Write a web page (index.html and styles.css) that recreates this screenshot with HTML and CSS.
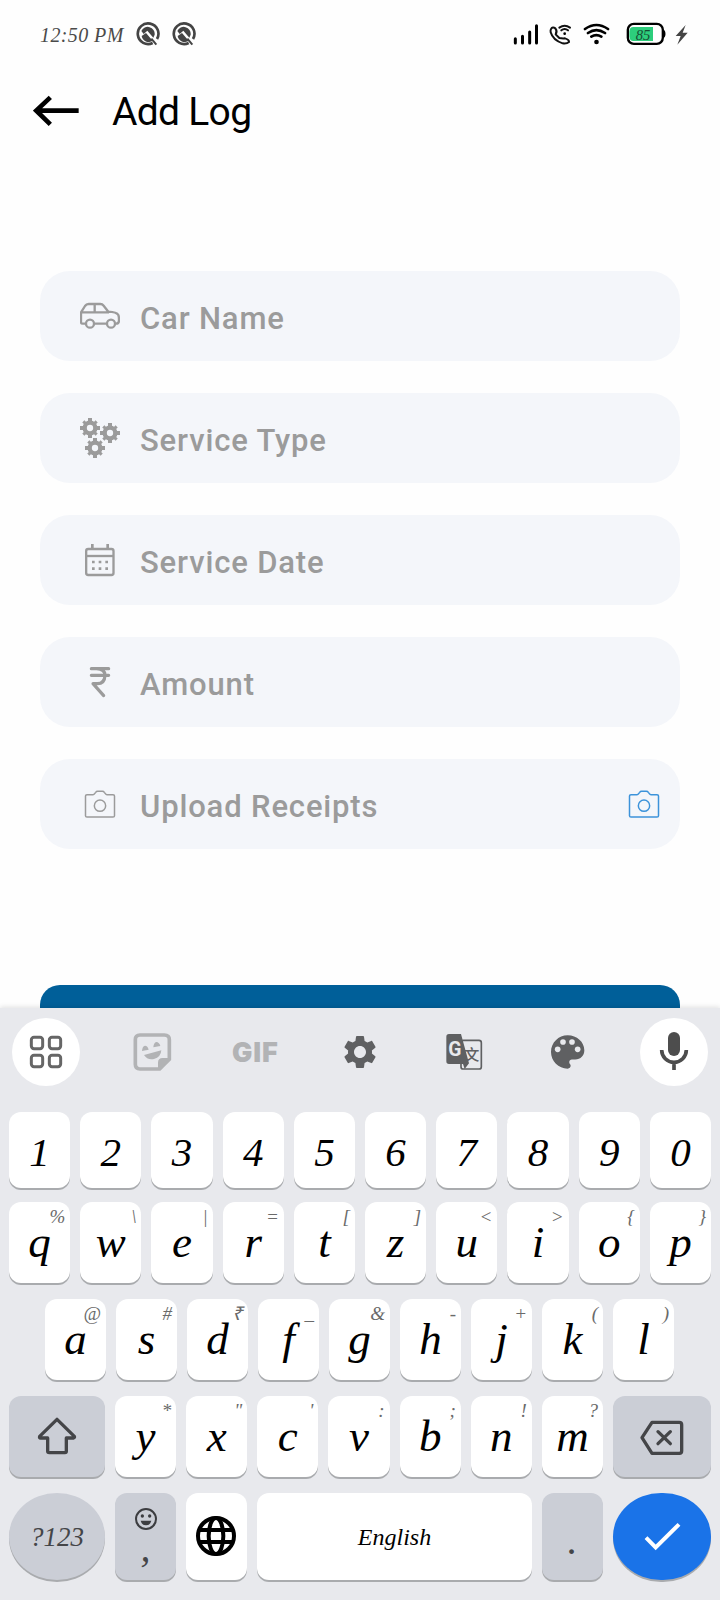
FILE: index.html
```html
<!DOCTYPE html>
<html lang="en">
<head>
<meta charset="utf-8">
<title>Add Log</title>
<link rel="stylesheet" href="styles.css">
</head>
<body>
<div class="screen">
  <main class="app">
    <header class="status">
      <span class="clock">12:50 PM</span>
      <svg class="badge-icon" viewBox="408 66 72 72"><use href="#quick"/></svg>
      <svg class="badge-icon" viewBox="408 66 72 72">
        <g id="quick">
          <path d="M458 129A31 31 0 1 1 471 117" fill="none" stroke="#444" stroke-width="8"/>
          <path d="M424 93A21 21 0 0 1 464 104L460 113L442 92L431 102ZM425 108L438 99L458 122A21 21 0 0 1 425 108Z" fill="#444"/>
          <path d="M454 116L469 134" stroke="#444" stroke-width="6"/>
        </g>
      </svg>
      <div class="status-right">
        <svg class="signal" viewBox="99 66 78 72"><path d="M106 116V129M127.500 109V129M149 96V129M169.500 77V129" stroke="#000" stroke-width="9" stroke-linecap="round"/></svg>
        <svg class="call" viewBox="207 66 69 72"><g fill="none" stroke="#111" stroke-width="6" stroke-linecap="round" stroke-linejoin="round"><path d="M213 87Q218 79 226 85Q233 94 227 103L238 114Q247 116 255 115Q268 119 267 126Q260 132 248 130Q219 121 212 97Q211 90 213 87Z"/><path d="M238 83Q254 72 270 83M244 91Q254 83 264 91"/></g><circle cx="254" cy="101" r="4"/></svg>
        <svg class="wifi" viewBox="309 66 81 72"><g fill="none" stroke="#000" stroke-width="8" stroke-linecap="round"><path d="M315 87Q349 63 384 87M324 99Q349 82 375 99M334 110Q349 101 364 110"/></g><circle cx="349.500" cy="126" r="7"/></svg>
        <svg class="battery" viewBox="438 66 120 72"><rect x="443.500" y="71.500" width="105" height="60" rx="18" fill="#fff" stroke="#000" stroke-width="7"/><path d="M551 92Q556 102 551 111" stroke="#000" stroke-width="6" fill="none"/><path d="M519 81H460Q448 81 448 96V108Q448 123 460 123H519Z" fill="#2dce7c"/><text x="467" y="120" class="battery-text">85</text></svg>
        <svg class="bolt" viewBox="585 66 42 72"><path d="M617 75L587 108H602L592 134L623 98H608Z" fill="#444"/></svg>
      </div>
    </header>
    <div class="titlebar">
      <svg class="back" viewBox="99 285 141 93"><path d="M236 332H110M151 292L109 332L151 373" fill="none" stroke="#000" stroke-width="14"/></svg>
      <h1 class="title">Add Log</h1>
    </div>
    <form class="fields">
      <div class="field">
        <svg class="field-icon" viewBox="150 108 120 120"><g fill="none" stroke="#9b9b9b" stroke-width="7" stroke-linejoin="round"><path d="M166 191H158Q153 191 153 186V157L165 138Q169 132 176 132H211Q217 132 221 137L235 155Q260 156 265 165Q267 169 267 181Q267 191 258 191M195 191H229M153 157H237M194 132V157"/><circle cx="180" cy="191" r="12"/><circle cx="243" cy="191" r="12"/></g></svg>
        <span class="label">Car Name</span>
      </div>
      <div class="field">
        <svg class="field-icon" viewBox="150 474 120 120">
          <g id="cog" fill="none" stroke="#9b9b9b"><circle cx="180" cy="504" r="16" stroke-width="13"/><path d="M180 474V486M180 522V534M150 504H162M198 504H210" stroke-width="12"/><path d="M160 484L168 492M192 516L200 524M200 484L192 492M168 516L160 524" stroke-width="9"/></g>
          <use href="#cog" x="60" y="15"/><use href="#cog" x="15" y="60"/>
        </svg>
        <span class="label">Service Type</span>
      </div>
      <div class="field">
        <svg class="field-icon" viewBox="150 120 120 120"><g fill="none" stroke="#9b9b9b" stroke-width="7"><rect x="168.500" y="147" width="82" height="78" rx="6"/><path d="M168 168H252"/><path d="M187 132V147M233 132V147" stroke-width="8"/><path d="M186 186H194M206 186H214M226 186H234M186 206H194M206 206H214M226 206H234" stroke-width="8"/></g></svg>
        <span class="label">Service Date</span>
      </div>
      <div class="field">
        <svg class="field-icon" viewBox="150 486 120 120"><path d="M184 506H236M184 526H236M200 506Q225 507 225 526Q224 551 202 551H189L221 587" fill="none" stroke="#9b9b9b" stroke-width="9.500" stroke-linecap="round" stroke-linejoin="round"/></svg>
        <span class="label">Amount</span>
      </div>
      <div class="field">
        <svg class="field-icon" viewBox="150 852 120 120"><g id="camera" fill="none" stroke="currentColor" stroke-width="4.500"><path d="M171 884H189Q192 884 194 881L197 877Q199 874 203 874H217Q221 874 223 877L226 881Q228 884 231 884H249Q253.500 884 253.500 888V947Q253.500 951 249 951H171Q166.500 951 166.500 947V888Q166.500 884 171 884Z"/><circle cx="210" cy="917" r="17"/></g></svg>
        <span class="label">Upload Receipts</span>
        <svg class="field-icon upload" viewBox="150 852 120 120"><use href="#camera"/></svg>
      </div>
    </form>
    <div class="submit"></div>
  </main>

  <section class="keyboard">
    <div class="tools">
      <div class="tool round"><svg viewBox="36 54 204 204"><g fill="none" stroke="#666" stroke-width="9"><rect x="94" y="112" width="34" height="34" rx="8"/><rect x="148" y="112" width="34" height="34" rx="8"/><rect x="94" y="166" width="34" height="34" rx="8"/><rect x="148" y="166" width="34" height="34" rx="8"/></g></svg></div>
      <div class="tool"><svg viewBox="350 54 204 204"><path d="M419 105H492Q507 105 507 119V178L478 207H419Q405 207 405 193V119Q405 105 419 105Z" fill="none" stroke="#b2b3b5" stroke-width="11"/><path d="M510 174H487Q473 174 473 188V210ZM425 153Q426 138 434 137Q442 137 445 149ZM459 142Q460 128 468 126Q477 127 480 138ZM431 165L483 151Q482 171 461 177Q441 181 431 165Z" fill="#b2b3b5"/></svg></div>
      <div class="tool gif">GIF</div>
      <div class="tool"><svg viewBox="978 54 204 204"><path transform="translate(1020 96) scale(5)" fill="#5f6062" d="M19.140 12.940c.040-.300.060-.610.060-.940 0-.320-.020-.640-.070-.940l2.030-1.580c.180-.140.230-.410.120-.610l-1.920-3.320c-.120-.220-.370-.290-.590-.220l-2.390.960c-.500-.380-1.030-.700-1.620-.940L14.400 2.810c-.040-.240-.240-.410-.480-.410h-3.840c-.240 0-.430.170-.470.410L9.250 5.350c-.590.240-1.130.570-1.620.940L5.240 5.330c-.220-.080-.470 0-.590.220L2.740 8.870c-.120.210-.080.470.120.610l2.030 1.580c-.050.300-.090.630-.090.940s.020.640.070.940l-2.030 1.580c-.180.140-.230.410-.120.610l1.920 3.320c.120.220.370.290.590.220l2.390-.960c.500.380 1.030.700 1.620.940l.360 2.540c.050.240.240.410.480.410h3.840c.240 0 .440-.170.470-.410l.360-2.540c.590-.240 1.130-.560 1.620-.940l2.390.960c.220.080.470 0 .590-.220l1.920-3.320c.120-.220.070-.470-.120-.610l-2.010-1.580zM12 15.600c-1.980 0-3.600-1.620-3.600-3.600s1.620-3.600 3.600-3.600 3.600 1.620 3.600 3.600-1.620 3.600-3.600 3.600z"/></svg></div>
      <div class="tool"><svg viewBox="212 54 204 204"><rect x="302" y="121" width="61" height="86" rx="7" fill="none" stroke="#5f6062" stroke-width="5"/><path d="M266 102H302L326 190L313 207L308 192H266Q258 192 258 184V110Q258 102 266 102Z" fill="#5f6062"/><text x="264" y="168" class="tr-g">G</text><text x="311" y="180" class="tr-han">文</text></svg></div>
      <div class="tool"><svg viewBox="526 54 204 204"><path transform="translate(564 96) scale(5)" fill="#5f6062" d="M12 2C6.490 2 2 6.490 2 12s4.490 10 10 10c1 0 1.800-.800 1.800-1.700 0-.500-.200-.850-.450-1.150-.250-.300-.400-.650-.400-1.050 0-.900.700-1.600 1.600-1.600H16.500c3.300 0 5.500-2.300 5.500-5.500C22 6 17.500 2 12 2z"/><g fill="#e8e9ed"><circle cx="594" cy="148" r="8.500"/><circle cx="610" cy="126" r="8.500"/><circle cx="637" cy="126" r="8.500"/><circle cx="654" cy="148" r="8.500"/></g></svg></div>
      <div class="tool round"><svg viewBox="840 54 204 204"><rect x="924" y="96" width="36" height="72" rx="18" fill="#4d4d4d"/><path d="M905 150A37 37 0 0 0 979 150M942 187V210" fill="none" stroke="#4d4d4d" stroke-width="11"/></svg></div>
    </div>

    <div class="row digits">
      <div class="key">1</div><div class="key">2</div><div class="key">3</div><div class="key">4</div><div class="key">5</div><div class="key">6</div><div class="key">7</div><div class="key">8</div><div class="key">9</div><div class="key">0</div>
    </div>
    <div class="row">
      <div class="key">q<span class="hint">%</span></div><div class="key">w<span class="hint">\</span></div><div class="key">e<span class="hint">|</span></div><div class="key">r<span class="hint">=</span></div><div class="key">t<span class="hint">[</span></div><div class="key">z<span class="hint">]</span></div><div class="key">u<span class="hint">&lt;</span></div><div class="key">i<span class="hint">&gt;</span></div><div class="key">o<span class="hint">{</span></div><div class="key">p<span class="hint">}</span></div>
    </div>
    <div class="row home">
      <div class="key">a<span class="hint">@</span></div><div class="key">s<span class="hint">#</span></div><div class="key">d<span class="hint">₹</span></div><div class="key">f<span class="hint">_</span></div><div class="key">g<span class="hint">&amp;</span></div><div class="key">h<span class="hint">-</span></div><div class="key">j<span class="hint">+</span></div><div class="key">k<span class="hint">(</span></div><div class="key">l<span class="hint">)</span></div>
    </div>
    <div class="row">
      <div class="key dark wide"><svg viewBox="27 33 288 243"><path d="M171 103L119 154Q117 159 122 159H143V199Q143 203 148 203H195Q199 203 199 199V159H220Q225 158 223 154Z" fill="none" stroke="#444548" stroke-width="10" stroke-linejoin="round"/></svg></div>
      <div class="key">y<span class="hint">*</span></div><div class="key">x<span class="hint">"</span></div><div class="key">c<span class="hint">'</span></div><div class="key">v<span class="hint">:</span></div><div class="key">b<span class="hint">;</span></div><div class="key">n<span class="hint">!</span></div><div class="key">m<span class="hint">?</span></div>
      <div class="key dark widest"><svg viewBox="759 33 294 243"><g fill="none" stroke="#444548" stroke-width="10" stroke-linejoin="round"><path d="M876 112H958Q965 112 965 119V198Q965 205 958 205H876L846 158Z"/><path d="M894 140L931 176M931 140L894 176" stroke-linecap="round"/></g></svg></div>
    </div>
    <div class="row bottom">
      <div class="key dark wide pill symbols">?123</div>
      <div class="key dark comma"><svg viewBox="402 369 66 66"><circle cx="435" cy="402" r="30" fill="none" stroke="#3c3d40" stroke-width="6"/><circle cx="424" cy="393" r="5" fill="#3c3d40"/><circle cx="446" cy="393" r="5" fill="#3c3d40"/><path d="M419 407H451Q447 421 435 421T419 407Z" fill="#3c3d40"/></svg><span class="comma-char">,</span></div>
      <div class="key"><svg viewBox="558 324 183 261"><g fill="none" stroke="#000" stroke-width="12"><circle cx="648" cy="453" r="54"/><ellipse cx="648" cy="453" rx="22" ry="54"/><path d="M598 435H698M598 471H698"/></g></svg></div>
      <div class="key space">English</div>
      <div class="key dark dot">.</div>
      <div class="key widest pill enter"><svg viewBox="759 324 294 261"><path d="M858 458L887 487L957 418" fill="none" stroke="#fff" stroke-width="12"/></svg></div>
    </div>
  </section>
</div>
</body>
</html>
```
FILE: styles.css
```css
* { box-sizing: border-box; }
body { margin: 0; background: #fff; }
svg { display: block; }

.screen {
  width: 720px;
  height: 1600px;
  display: flex;
  flex-direction: column;
  overflow: hidden;
  background: #fefefe;
  font-family: Roboto, sans-serif;
}

.app { height: 1008px; overflow: hidden; }

.status {
  display: flex;
  align-items: center;
  height: 68px;
  padding: 0 31px 0 40px;
}
.clock {
  width: 96px;
  font: italic 20px/24px "Liberation Serif", serif;
  letter-spacing: 0.4px;
  color: #4a4a4a;
  padding-top: 2px;
  white-space: nowrap;
}
.badge-icon { width: 24px; height: 24px; margin-right: 12px; }
.status-right { display: flex; margin-left: auto; }
.status-right svg { height: 24px; }
.signal { width: 26px; margin-right: 10px; }
.call { width: 23px; margin-right: 11px; }
.wifi { width: 27px; margin-right: 16px; }
.battery { width: 40px; margin-right: 9px; }
.bolt { width: 14px; }
.battery-text { font: italic 44px "Liberation Serif", serif; fill: #174d34; }

.titlebar {
  display: flex;
  align-items: center;
  height: 85px;
  padding-left: 33px;
}
.back { width: 47px; height: 31px; }
.title {
  margin: 2px 0 0 32px;
  font-size: 39px;
  font-weight: 400;
  letter-spacing: -0.7px;
  line-height: 46px;
  color: #000;
}

.fields {
  display: flex;
  flex-direction: column;
  gap: 32px;
  padding: 118px 40px 0;
}
.field {
  display: flex;
  align-items: center;
  height: 90px;
  padding: 0 16px 0 40px;
  border-radius: 30px;
  background: #f4f6fa;
  color: #9b9b9b;
}
.field-icon { width: 40px; height: 40px; }
.label {
  margin: 5px 0 0 20px;
  font-size: 31px;
  font-weight: 500;
  letter-spacing: 0.85px;
  line-height: 40px;
}
.upload { margin-left: auto; color: #3c93da; }

.submit {
  height: 80px;
  margin: 136px 40px 0;
  border-radius: 20px;
  background: #005f99;
}

.keyboard {
  height: 592px;
  padding: 10px 9px 0;
  background: #e8e9ed;
  box-shadow: 0 -1px 5px rgba(0, 0, 0, 0.12);
  font-family: "Liberation Serif", serif;
  font-style: italic;
}
.tools {
  display: flex;
  justify-content: space-between;
  padding: 0 3px;
  margin-bottom: 26px;
}
.tool { width: 68px; height: 68px; }
.tool svg { width: 68px; height: 68px; }
.round { border-radius: 50%; background: #fff; }
.gif {
  font: 900 27px/70px Inter, sans-serif;
  letter-spacing: 0.8px;
  text-align: center;
  color: #b2b3b5;
}
.tr-g { font: 700 58px Roboto, sans-serif; fill: #e8e9ed; }
.tr-han { font: 500 46px "Noto Sans CJK SC", sans-serif; fill: #5f6062; }

.row {
  display: flex;
  gap: 10px;
  height: 81px;
  margin-bottom: 16px;
}
.digits { height: 76px; margin-bottom: 14px; }
.home { padding: 0 37px 0 36px; }
.bottom { height: 87px; margin-bottom: 0; }

.key {
  position: relative;
  flex: 1 1 0;
  min-width: 0;
  border-radius: 12px;
  background: #fff;
  box-shadow: 0 2px 0 #a9abae;
  font-size: 45px;
  line-height: 80px;
  text-align: center;
  color: #000;
}
.digits .key { font-size: 41px; line-height: 80px; }
.key svg { width: 100%; height: 100%; }
.hint {
  position: absolute;
  top: 0;
  right: 5px;
  font-size: 19px;
  line-height: 29px;
  color: #6a6a6a;
}
.dark { background: #cbced6; color: #444548; }
.wide { flex: 0 0 96px; }
.widest { flex: 0 0 98px; }
.pill { border-radius: 48px / 43.5px; }
.symbols { font-size: 27px; line-height: 88px; }
.comma {
  display: flex;
  flex-direction: column;
  align-items: center;
  padding-top: 15px;
}
.comma svg { width: 22px; height: 22px; }
.comma-char { font-size: 40px; line-height: 36px; }
.space { flex: 0 0 275px; font-size: 24px; line-height: 88px; }
.dot { font-size: 40px; line-height: 95px; }
.enter { background: #1a73e8; }
```
